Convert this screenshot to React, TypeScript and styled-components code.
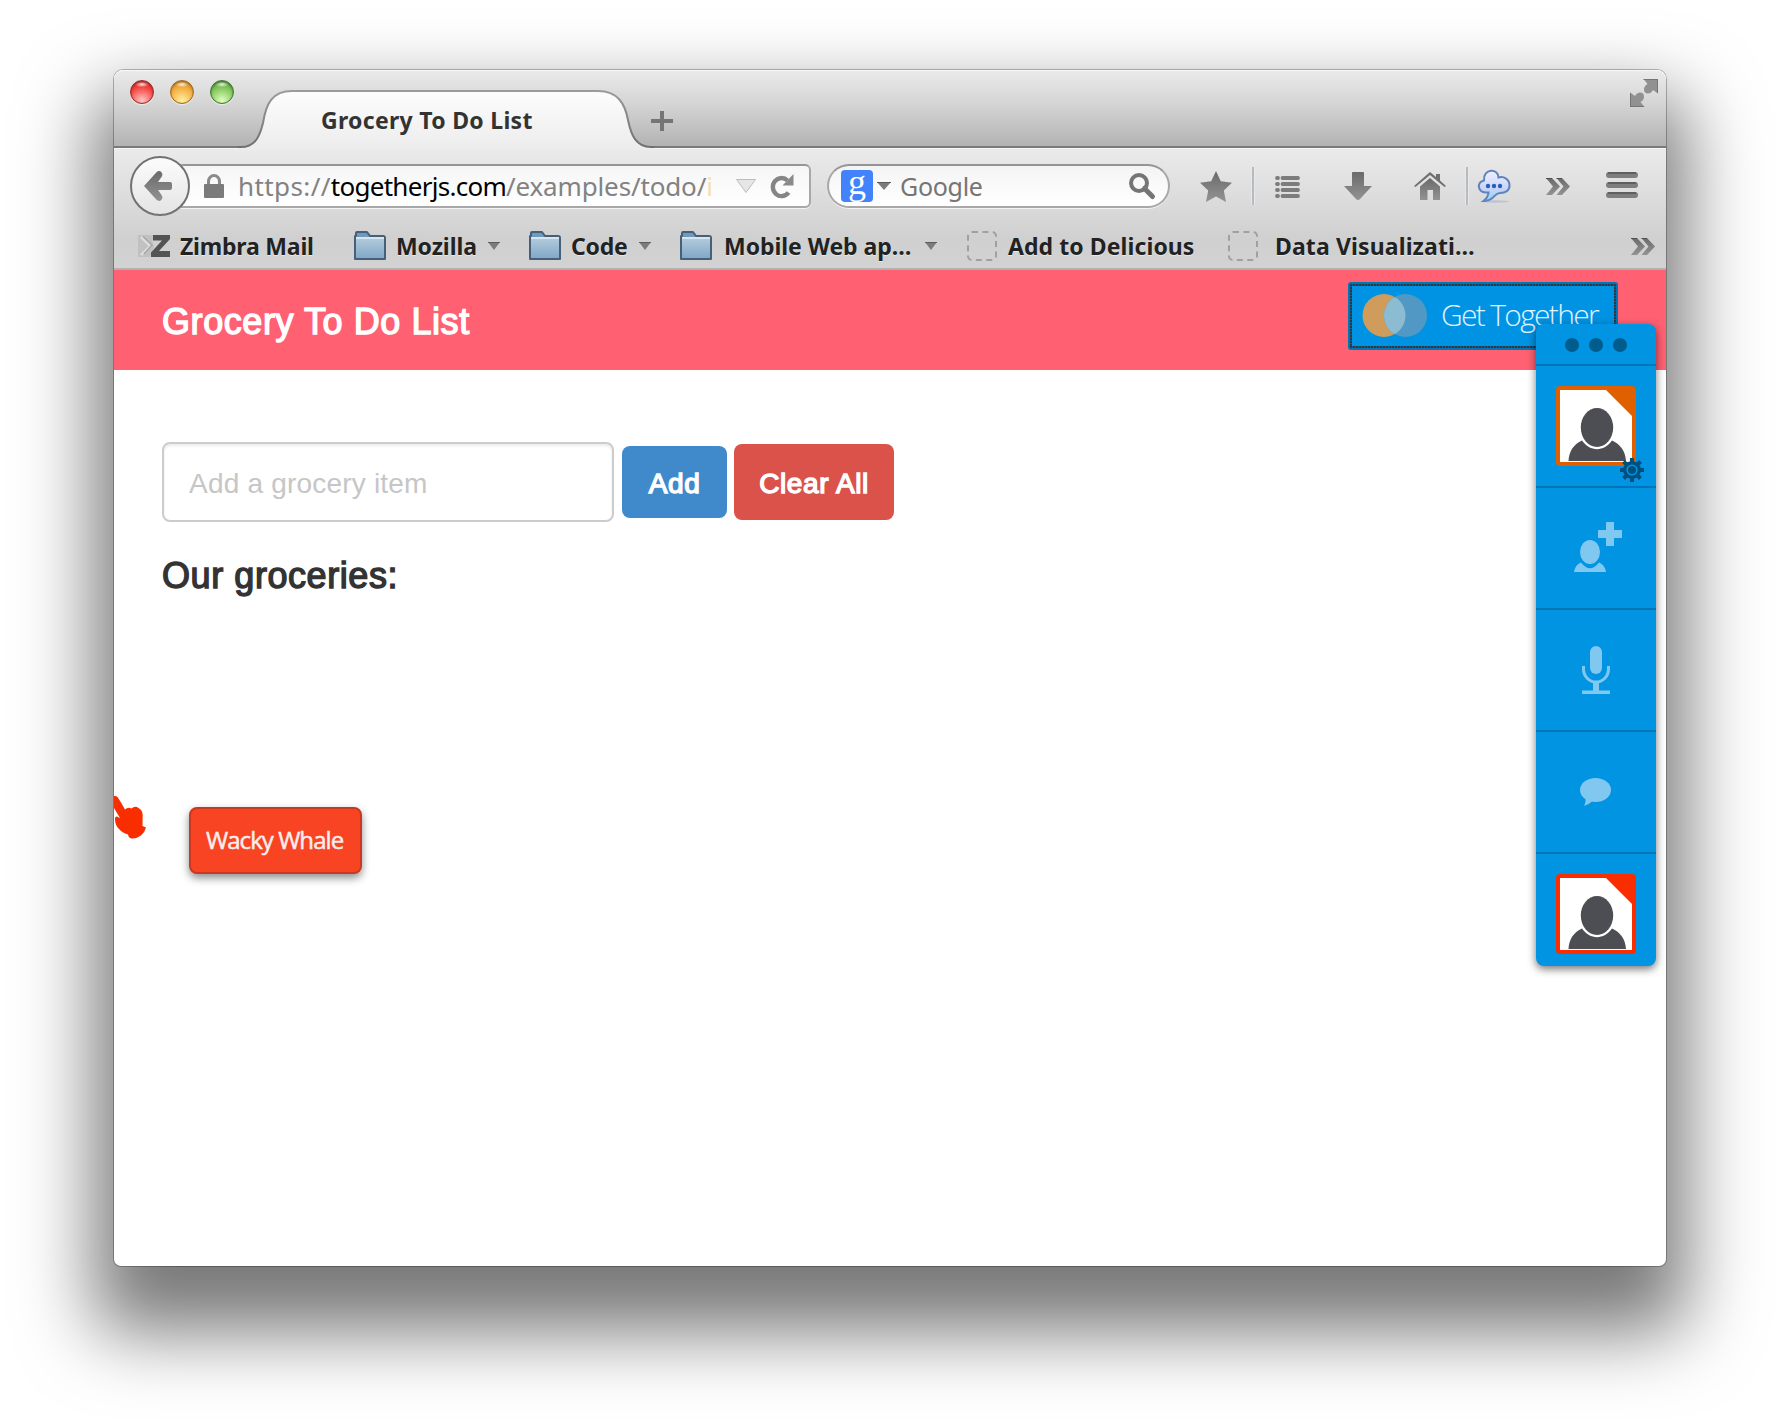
import React from "react";
import styled, { createGlobalStyle } from "styled-components";

const GlobalStyle = createGlobalStyle`
  * { box-sizing: border-box; }
  body { margin: 0; background: #fff; }
  svg { display: block; flex: none; overflow: visible; }
`;

const chromeFont = `"Noto Sans", "Open Sans", sans-serif`;
const pageFont = `"Liberation Sans", Arial, sans-serif`;
const togetherFont = `"Open Sans", "Noto Sans", sans-serif`;

const Desktop = styled.div`
  width: 1780px;
  height: 1424px;
  padding: 70px 114px;
  overflow: hidden;
  background: #fff;
`;

const Window = styled.div`
  position: relative;
  display: flex;
  flex-direction: column;
  width: 1552px;
  height: 1196px;
  border-radius: 9px 9px 7px 7px;
  background: #fff;
  box-shadow: 0 0 0 1px rgba(0, 0, 0, 0.26), 0 46px 74px 20px rgba(0, 0, 0, 0.53);
`;

/* ---------- title bar ---------- */

const TitleBar = styled.header`
  display: flex;
  align-items: flex-start;
  height: 78px;
  padding: 0 8px 0 16px;
  border-bottom: 2px solid #7a7a7a;
  border-radius: 9px 9px 0 0;
  background: linear-gradient(#ebebeb, #d4d4d4 45%, #b3b3b3);
  box-shadow: inset 0 1px 0 #f8f8f8;
`;

const Lights = styled.div`
  display: flex;
  gap: 16px;
  margin-top: 10px;
`;

const Light = styled.span<{ $edge: string; $mid: string; $glow: string }>`
  width: 24px;
  height: 24px;
  border-radius: 50%;
  border: 1px solid ${(p) => p.$edge};
  background: radial-gradient(ellipse 7px 3px at 50% 15%, rgba(255, 255, 255, 0.85), transparent),
    radial-gradient(circle at 50% 90%, ${(p) => p.$glow}, ${(p) => p.$mid} 62%, ${(p) => p.$edge} 115%);
  box-shadow: inset 0 1px 2px ${(p) => p.$edge}, 0 1px 1px rgba(255, 255, 255, 0.6);
`;

const Tab = styled.div`
  position: relative;
  display: flex;
  width: 416px;
  height: 60px;
  margin: 20px 0 0 4px;
  padding: 13px 0 0 83px;
`;

const TabShape = styled.svg`
  position: absolute;
  left: 0;
  top: 0;
`;

const TabTitle = styled.span`
  position: relative;
  font: 700 23px/34px ${chromeFont};
  letter-spacing: 0.3px;
  color: #333;
  white-space: nowrap;
`;

const Push = styled.span`
  flex: 1;
`;

const Glyph = styled.svg<{ $ml?: number; $mt?: number }>`
  margin-left: ${(p) => p.$ml ?? 0}px;
  margin-top: ${(p) => p.$mt ?? 0}px;
`;

/* ---------- tool bars ---------- */

const Toolbar = styled.div`
  height: 122px;
  border-bottom: 2px solid #b1b1b1;
  background: linear-gradient(#ebebeb, #d0d0d0 75%, #d2d2d2);
  box-shadow: inset 0 1px 0 #f6f6f6;
`;

const NavRow = styled.div`
  display: flex;
  align-items: center;
  height: 76px;
  padding-left: 16px;
`;

const Back = styled.div`
  z-index: 1;
  display: flex;
  align-items: center;
  justify-content: center;
  width: 60px;
  height: 60px;
  padding-right: 4px;
  border: 2px solid #727272;
  border-radius: 50%;
  background: linear-gradient(#fcfcfc, #e4e4e4);
`;

const UrlBar = styled.div`
  display: flex;
  align-items: center;
  width: 630px;
  height: 44px;
  margin-left: -9px;
  padding: 0 15px 0 21px;
  border: 2px solid #a8a8a8;
  border-top-color: #959595;
  border-radius: 0 6px 6px 0;
  background: linear-gradient(#f6f6f6, #fff);
  box-shadow: 0 1px 0 rgba(255, 255, 255, 0.7);
`;

const Url = styled.div`
  flex: 1;
  margin-left: 14px;
  font: 400 26px/38px ${chromeFont};
  color: #828282;
  white-space: nowrap;
`;

const UrlPart = styled.span<{ $color?: string; $ls: number }>`
  color: ${(p) => p.$color ?? "inherit"};
  letter-spacing: ${(p) => p.$ls}px;
`;

const SearchBar = styled.div`
  display: flex;
  align-items: center;
  width: 343px;
  height: 44px;
  margin-left: 16px;
  padding: 0 13px 0 12px;
  border: 2px solid #a8a8a8;
  border-top-color: #959595;
  border-radius: 22px;
  background: linear-gradient(#f4f4f4, #fff);
  box-shadow: 0 1px 0 rgba(255, 255, 255, 0.7);
`;

const Engine = styled.span`
  width: 32px;
  height: 32px;
  border-radius: 4px;
  background: #4283fb;
  color: #fff;
  font: 400 36px/25px "Liberation Serif", serif;
  text-align: center;
`;

const SearchText = styled.span`
  margin-left: 9px;
  font: 400 25px/38px ${chromeFont};
  letter-spacing: -0.3px;
  color: #757575;
`;

const Separator = styled.span<{ $ml: number }>`
  width: 4px;
  height: 38px;
  margin-left: ${(p) => p.$ml}px;
  background: linear-gradient(90deg, #e8e8e8 1px, #b5bbc1 1px, #b5bbc1 3px, #e8e8e8 3px);
`;

const BookmarkRow = styled.div`
  display: flex;
  align-items: center;
  height: 44px;
  padding: 0 11px 0 24px;
`;

const Bookmark = styled.div<{ $w: number; $gap: number }>`
  display: flex;
  align-items: center;
  width: ${(p) => p.$w}px;
  gap: ${(p) => p.$gap}px;
`;

const BookmarkLabel = styled.span<{ $w: number; $ls?: number }>`
  width: ${(p) => p.$w}px;
  font: 700 23px/40px ${chromeFont};
  letter-spacing: ${(p) => p.$ls ?? 0}px;
  color: #222;
  white-space: nowrap;
  text-shadow: 0 1px 0 rgba(255, 255, 255, 0.5);
`;

const Favicon = styled.span`
  flex: none;
  width: 30px;
  height: 30px;
  border: 2px dashed #a0a0a0;
  border-radius: 5px;
`;

/* ---------- page ---------- */

const PageHeader = styled.div`
  display: flex;
  justify-content: space-between;
  align-items: flex-start;
  height: 100px;
  padding: 12px 48px 0 48px;
  background: #ff6072;
`;

const Heading = styled.h1<{ $color: string; $ls: number }>`
  margin: 0;
  font: 400 36px/40px ${pageFont};
  letter-spacing: ${(p) => p.$ls}px;
  color: ${(p) => p.$color};
  -webkit-text-stroke: 1.4px ${(p) => p.$color};
`;

const HeaderTitle = styled.div`
  padding-top: 20px;
`;

const dashX = "repeating-linear-gradient(90deg, #33363a 0 2px, #0a6096 2px 3px)";
const dashY = "repeating-linear-gradient(#33363a 0 2px, #0a6096 2px 3px)";

const GetTogether = styled.button`
  display: flex;
  align-items: center;
  width: 270px;
  height: 68px;
  padding: 0 0 2px 11px;
  border: 2px solid #0075b4;
  border-radius: 3px;
  background: ${dashX} 0 0 / 100% 2px no-repeat, ${dashX} 0 100% / 100% 2px no-repeat,
    ${dashY} 0 0 / 2px 100% no-repeat, ${dashY} 100% 0 / 2px 100% no-repeat, #0093e3;
  background-origin: padding-box;
  font: 300 30px/40px ${togetherFont};
  letter-spacing: -1.7px;
  color: #e0f2fc;
  white-space: nowrap;
  text-align: left;
`;

const Content = styled.main`
  padding: 72px 48px 0;
`;

const Form = styled.div`
  display: flex;
  align-items: center;
  height: 80px;
`;

const Field = styled.input`
  width: 452px;
  height: 80px;
  padding: 3px 25px 0;
  border: 2px solid #ccc;
  border-radius: 8px;
  box-shadow: inset 0 2px 3px rgba(0, 0, 0, 0.08);
  background: #fff;
  font: 400 28px/40px ${pageFont};
  letter-spacing: 0.2px;
  &::placeholder {
    color: #c6c6c6;
    opacity: 1;
  }
`;

const ActionButton = styled.button<{ $w: number; $h: number; $bg: string; $ml: number }>`
  width: ${(p) => p.$w}px;
  height: ${(p) => p.$h}px;
  margin-left: ${(p) => p.$ml}px;
  padding: 3px 0 0;
  border: 0;
  border-radius: 8px;
  background: ${(p) => p.$bg};
  color: #fff;
  font: 400 28px/40px ${pageFont};
  letter-spacing: 0.6px;
  -webkit-text-stroke: 1.4px #fff;
`;

const ListTitle = styled.div`
  margin-top: 34px;
`;

/* ---------- collaboration overlays ---------- */

const Dock = styled.aside`
  position: absolute;
  left: 1422px;
  top: 254px;
  width: 120px;
  height: 642px;
  border-radius: 8px;
  background: #0094e2;
  box-shadow: 0 3px 9px rgba(0, 0, 0, 0.55);
`;

const Grip = styled.div`
  display: flex;
  justify-content: center;
  align-items: center;
  gap: 10px;
  height: 40px;
  padding-top: 2px;
`;

const GripDot = styled.span`
  width: 14px;
  height: 14px;
  border-radius: 50%;
  background: #005c8d;
`;

const Cell = styled.div<{ $h?: number }>`
  position: relative;
  display: flex;
  justify-content: center;
  height: ${(p) => p.$h ?? 122}px;
  border-top: 2px solid #0076b5;
`;

const Avatar = styled.div<{ $color: string }>`
  width: 80px;
  height: 80px;
  margin-top: 20px;
  border: 4px solid ${(p) => p.$color};
  border-radius: 4px;
  background: #fff;
`;

const Gear = styled.svg`
  position: absolute;
  left: 84px;
  top: 92px;
`;

const NameTag = styled.div`
  position: absolute;
  left: 75px;
  top: 737px;
  width: 173px;
  height: 67px;
  padding: 14px 0 0 15px;
  border: 2px solid #c93821;
  border-radius: 8px;
  background: #f94423;
  box-shadow: 0 4px 8px rgba(0, 0, 0, 0.45);
  font: 400 24px/34px ${togetherFont};
  letter-spacing: -0.95px;
  -webkit-text-stroke: 0.5px #f6eeee;
  color: #f6eeee;
  white-space: nowrap;
`;

const Hand = styled.svg`
  position: absolute;
  left: 0;
  top: 726px;
`;

/* ---------- drawings ---------- */

const Caret = ({ ml = 0, w = 12 }: { ml?: number; w?: number }) => (
  <Glyph $ml={ml} width={w} height="8" viewBox="0 0 14 8" preserveAspectRatio="none">
    <path d="M0 0h14L7 8z" fill="#7b7b7b" />
    <path d="M0 .5h14" stroke="#5b5b5b" />
  </Glyph>
);

const Folder = () => (
  <svg width="32" height="30" viewBox="0 0 32 30">
    <path d="M3 1h10l3 4h13q2 0 2 2v21H1V5h1V2q0-1 1-1z" fill="#6e9abd" stroke="#456078" strokeWidth="2" strokeLinejoin="round" />
    <path d="M2 7h28v20H2z" fill="url(#folder)" />
    <path d="M2 7h28" stroke="#d7e5ef" strokeWidth="2" />
  </svg>
);

const Chevrons = ({ ml = 0 }: { ml?: number }) => (
  <Glyph $ml={ml} width="24" height="17" viewBox="0 0 24 17">
    <path d="M0 0h6l8 8.500-8 8.500H0l7-8.500zM10.500 0H16l8 8.500-8 8.500h-5.500l7-8.500z" fill="url(#steel)" />
    <path d="M0 .5h6M10.500 .5H16" stroke="#505050" />
  </Glyph>
);

const Person = ({ color }: { color: string }) => (
  <svg width="72" height="72" viewBox="0 0 72 72">
    <path d="M46 0h26v26z" fill={color} />
    <path d="M8.500 71C9 61 14 54 22 50.500 30 62 44 62 52 50.500 60 54 65.500 61 66 71z" fill="#4d4e54" />
    <ellipse cx="37" cy="37.500" rx="16.200" ry="19.600" fill="#4d4e54" />
  </svg>
);

const teeth = [0, 45, 90, 135, 180, 225, 270, 315];

export default function App() {
  return (
    <Desktop>
      <GlobalStyle />
      <svg width="0" height="0" style={{ position: "absolute" }}>
        <defs>
          <linearGradient id="steel" x1="0" y1="0" x2="0" y2="1">
            <stop offset="0" stopColor="#6a6a6a" />
            <stop offset="1" stopColor="#939393" />
          </linearGradient>
          <linearGradient id="folder" x1="0" y1="0" x2="0" y2="1">
            <stop offset="0" stopColor="#b4cadb" />
            <stop offset="1" stopColor="#81a9c8" />
          </linearGradient>
          <linearGradient id="tabFill" x1="0" y1="0" x2="0" y2="1">
            <stop offset="0" stopColor="#fdfdfd" />
            <stop offset="1" stopColor="#ececec" />
          </linearGradient>
          <linearGradient id="tabEdge" x1="0" y1="0" x2="0" y2="1">
            <stop offset="0" stopColor="#9b9b9b" />
            <stop offset="1" stopColor="#707070" />
          </linearGradient>
          <linearGradient id="cloud" x1="0" y1="0" x2="0" y2="1">
            <stop offset="0" stopColor="#f0f0ff" />
            <stop offset="0.6" stopColor="#c9d3fa" />
            <stop offset="1" stopColor="#8fd4f4" />
          </linearGradient>
        </defs>
      </svg>
      <Window>
        <TitleBar>
          <Lights>
            <Light $edge="#9c2b27" $mid="#f5413d" $glow="#ffc9c4" />
            <Light $edge="#a06a1c" $mid="#f2a93a" $glow="#fff0a0" />
            <Light $edge="#41762c" $mid="#7cc356" $glow="#e2ffc0" />
          </Lights>
          <Tab>
            <TabShape width="416" height="60" viewBox="0 0 416 60">
              <path
                d="M0 60V57H3C18 57 22 45 25 33C28 14 34 1 54 1H360C380 1 387 14 390 30C393 45 398 57 413 57H416V60z"
                fill="url(#tabFill)"
              />
              <path
                d="M0 57H3C18 57 22 45 25 33C28 14 34 1 54 1H360C380 1 387 14 390 30C393 45 398 57 413 57H416"
                fill="none"
                stroke="url(#tabEdge)"
                strokeWidth="2"
              />
            </TabShape>
            <TabTitle>Grocery To Do List</TabTitle>
          </Tab>
          <Glyph $ml={-3} $mt={41} width="22" height="20" viewBox="0 0 22 20">
            <path d="M9 0h4v8h9v4h-9v8H9v-8H0V8h9z" fill="#757575" />
          </Glyph>
          <Push />
          <Glyph $mt={9} width="28" height="28" viewBox="0 0 28 28">
            <path d="M13.500 0H28v14.500l-5-3.500q-2 3.500-5 3.500a4 4 0 0 1-4-4q0-3.500 3.500-5.500z" fill="#919191" />
            <path d="M14.500 28H0V13.500L5 17q2-3.500 5-3.500a4 4 0 0 1 4 4q0 3.500-3.500 5.500z" fill="#919191" />
            <path d="M13.500 .5H28M27.500 0v14M.5 14v14M0 27.500h14" stroke="#757575" />
          </Glyph>
        </TitleBar>

        <Toolbar>
          <NavRow>
            <Back>
              <svg width="28" height="30" viewBox="0 0 28 30">
                <path
                  d="M0 15L12.500 1.200q2.500-2.200 4.800-.2 2 2 .7 4.300L14 11h12q2 0 2 2v4q0 2-2 2H14l4 5.700q1.300 2.300-.7 4.300-2.300 2-4.800-.2z"
                  fill="url(#steel)"
                />
              </svg>
            </Back>
            <UrlBar>
              <svg width="20" height="24" viewBox="0 0 20 24">
                <path d="M4.500 12V7.500a5.500 6 0 0 1 11 0V12" fill="none" stroke="#8a8a8a" strokeWidth="3" />
                <rect y="10" width="20" height="14" rx="1" fill="#7b7b7b" />
              </svg>
              <Url>
                <UrlPart $ls={0.4}>https://</UrlPart>
                <UrlPart $ls={-0.72} $color="#000">
                  togetherjs.com
                </UrlPart>
                <UrlPart $ls={-0.15}>/examples/todo/</UrlPart>
                <UrlPart $ls={0} $color="#f7ddb2">
                  i
                </UrlPart>
              </Url>
              <Glyph $ml={8} width="20" height="14" viewBox="0 0 20 14">
                <path d="M.5.5h19L10 13.500z" fill="#e6e6e6" stroke="#bdbdbd" />
              </Glyph>
              <Glyph $ml={15} width="23" height="24" viewBox="0 0 23 24">
                <path d="M17.500 18.500A8.700 9 0 1 1 16.500 6.500" fill="none" stroke="#858585" strokeWidth="4.400" />
                <path d="M22.500 0v11.500H11.500z" fill="#8a8a8a" />
              </Glyph>
            </UrlBar>
            <SearchBar>
              <Engine>g</Engine>
              <Caret ml={4} w={14} />
              <SearchText>Google</SearchText>
              <Push />
              <svg width="26" height="26" viewBox="0 0 26 26">
                <circle cx="10" cy="10" r="8" fill="none" stroke="#757575" strokeWidth="4" />
                <path d="M15.500 15.500L23.500 23.500" stroke="#757575" strokeWidth="5" strokeLinecap="round" />
              </svg>
            </SearchBar>
            <Glyph $ml={30} width="32" height="31" viewBox="0 0 32 31">
              <path d="M16 0l4.800 10.200L32 11.800l-8.200 7.800L26 31l-10-5.500L6 31l2.200-11.400L0 11.800l11.200-1.600z" fill="url(#steel)" />
            </Glyph>
            <Separator $ml={19} />
            <Glyph $ml={20} $mt={3} width="25" height="23" viewBox="0 0 25 23">
              <path d="M2 2h1M7.500 2H23M2 8h1M7.500 8H23M2 14h1M7.500 14H23M2 20h1M7.500 20H23" stroke="#7c7c7c" strokeWidth="3.800" strokeLinecap="round" />
            </Glyph>
            <Glyph $ml={44} width="28" height="28" viewBox="0 0 28 28">
              <path d="M8 1q0-1 1-1h10q1 0 1 1v13h8L16 27q-2 2-4 0L0 14h8z" fill="url(#steel)" />
            </Glyph>
            <Glyph $ml={42} width="32" height="28" viewBox="0 0 32 28">
              <path d="M16 0l6 5V2h4v6.500l6 5.500-1.500 1L16 3 1.500 15 0 14z" fill="#707070" />
              <path d="M16 6l10 8.500V28h-7V18h-5.500v10H6V14.500z" fill="url(#steel)" />
            </Glyph>
            <Separator $ml={19} />
            <Glyph $ml={9} width="33" height="33" viewBox="0 0 33 33">
              <ellipse cx="17" cy="31.500" rx="14" ry="1.200" fill="#a9b2c4" opacity="0.6" />
              <path
                d="M10.500 22.500C-1.500 23.500-1.500 11.500 6 10.500 5-2 20.500-2 20.500 7.500 26 6 31.500 9.500 31.500 15.500 31.500 20.500 27.500 23 22 23 18.500 23 17 25.500 15 27.500Q11 31 5.500 31 10 27.500 10.500 22.500z"
                fill="url(#cloud)"
                stroke="#5f83bd"
                strokeWidth="2"
              />
              <circle cx="10" cy="16" r="2.200" fill="#2462b4" />
              <circle cx="16" cy="16" r="2.200" fill="#2462b4" />
              <circle cx="22" cy="16" r="2.200" fill="#2462b4" />
            </Glyph>
            <Chevrons ml={35} />
            <Glyph $ml={36} $mt={-2} width="32" height="26" viewBox="0 0 32 26">
              <path d="M3 3h26M3 13h26M3 23h26" stroke="#7e7e7e" strokeWidth="6" strokeLinecap="round" />
              <path d="M2.500 1h27M2.500 11h27M2.500 21h27" stroke="#565656" strokeWidth="1.500" strokeLinecap="round" />
            </Glyph>
          </NavRow>

          <BookmarkRow>
            <Bookmark $w={216} $gap={10}>
              <svg width="32" height="22" viewBox="0 0 32 22">
                <path d="M0 0h15v5h-1l2 7-4 10H0z" fill="#c1c1c1" />
                <path d="M3 2l9.500 9-9.500 9" fill="none" stroke="#dedede" strokeWidth="2.500" />
                <path d="M5 1.500l9 8.500-8 9" fill="none" stroke="#a6a6a6" strokeWidth="1.500" />
                <path d="M15 0h17v4L21 16h11v6H13v-4.500L24 5.500h-9z" fill="#545454" />
              </svg>
              <BookmarkLabel $w={140} $ls={-0.2}>
                Zimbra Mail
              </BookmarkLabel>
            </Bookmark>
            <Bookmark $w={175} $gap={10}>
              <Folder />
              <BookmarkLabel $w={82} $ls={-0.1}>
                Mozilla
              </BookmarkLabel>
              <Caret />
            </Bookmark>
            <Bookmark $w={151} $gap={10}>
              <Folder />
              <BookmarkLabel $w={58} $ls={-0.2}>
                Code
              </BookmarkLabel>
              <Caret />
            </Bookmark>
            <Bookmark $w={287} $gap={12}>
              <Folder />
              <BookmarkLabel $w={189} $ls={-0.05}>
                Mobile Web ap…
              </BookmarkLabel>
              <Caret />
            </Bookmark>
            <Bookmark $w={261} $gap={11}>
              <Favicon />
              <BookmarkLabel $w={200} $ls={0.08}>
                Add to Delicious
              </BookmarkLabel>
            </Bookmark>
            <Bookmark $w={260} $gap={17}>
              <Favicon />
              <BookmarkLabel $w={200} $ls={0.12}>
                Data Visualizati…
              </BookmarkLabel>
            </Bookmark>
            <Push />
            <Chevrons />
          </BookmarkRow>
        </Toolbar>

        <PageHeader>
          <HeaderTitle>
            <Heading $color="#fff" $ls={0.57}>
              Grocery To Do List
            </Heading>
          </HeaderTitle>
          <GetTogether>
            <svg width="66" height="44" viewBox="0 0 66 44">
              <circle cx="23" cy="22.500" r="21.500" fill="#d09c5b" />
              <circle cx="44.500" cy="22.500" r="21.500" fill="#5198c4" />
              <path d="M33.750 3.900a21.500 21.500 0 0 1 0 37.200a21.500 21.500 0 0 1 0-37.200z" fill="#8cbcd2" />
            </svg>
            <Glyph as="span" $ml={14}>
              Get Together
            </Glyph>
          </GetTogether>
        </PageHeader>

        <Content>
          <Form>
            <Field placeholder="Add a grocery item" />
            <ActionButton $w={105} $h={72} $bg="#408acc" $ml={8}>
              Add
            </ActionButton>
            <ActionButton $w={160} $h={76} $bg="#da524a" $ml={7}>
              Clear All
            </ActionButton>
          </Form>
          <ListTitle>
            <Heading as="h2" $color="#333" $ls={0.57}>
              Our groceries:
            </Heading>
          </ListTitle>
        </Content>

        <Hand width="34" height="46" viewBox="0 0 34 46">
          <path
            d="M0 0Q2-.5 3.500 1L7 6.500 11 13.500Q14 10.500 17.500 12.500 21 9.500 24.500 12 28.500 14 28.700 19L28.500 30 32 31.500Q31 36 27 39.500 22 43 17.500 42.500 14.500 42 14 38.500 8 36.500 5 33 1.500 30 1 24 .5 20.500 3 20.500L6 22 0 12z"
            fill="#f92e00"
          />
        </Hand>
        <NameTag>Wacky Whale</NameTag>

        <Dock>
          <Grip>
            <GripDot />
            <GripDot />
            <GripDot />
          </Grip>
          <Cell>
            <Avatar $color="#e06000">
              <Person color="#e06000" />
            </Avatar>
            <Gear width="24" height="24" viewBox="-12 -12 24 24">
              {teeth.map((a) => (
                <rect key={a} x="-2" y="-12" width="4" height="5" fill="#00507f" transform={`rotate(${a})`} />
              ))}
              <circle r="7.300" fill="#0094e2" stroke="#00507f" strokeWidth="3.400" />
              <circle r="4" fill="#00507f" />
            </Gear>
          </Cell>
          <Cell>
            <Glyph $mt={34} $ml={4} width="48" height="50" viewBox="0 0 48 50">
              <path d="M32 0h8v8h8v8h-8v8h-8v-8h-8V8h8z" fill="#80c8f0" />
              <ellipse cx="16" cy="30" rx="10" ry="12" fill="#80c8f0" />
              <path d="M0 50Q1 43 7 40.500 16 52 25 40.500 31 43 32 50z" fill="#80c8f0" />
            </Glyph>
          </Cell>
          <Cell>
            <Glyph $mt={36} width="28" height="48" viewBox="0 0 28 48">
              <rect x="8" width="12" height="28" rx="6" fill="#80c8f0" />
              <path d="M1.500 20v3a12.500 13 0 0 0 25 0v-3" fill="none" stroke="#80c8f0" strokeWidth="3" />
              <path d="M11 35h6v9.500h11V48H0v-3.500h11z" fill="#80c8f0" />
            </Glyph>
          </Cell>
          <Cell>
            <Glyph $mt={46} width="32" height="28" viewBox="0 0 32 28">
              <ellipse cx="15.500" cy="12" rx="15.500" ry="12" fill="#80c8f0" />
              <path d="M5.500 19Q6 25 4 28q4-1 8-4.500z" fill="#80c8f0" />
            </Glyph>
          </Cell>
          <Cell $h={114}>
            <Avatar $color="#f92e00">
              <Person color="#f92e00" />
            </Avatar>
          </Cell>
        </Dock>
      </Window>
    </Desktop>
  );
}
